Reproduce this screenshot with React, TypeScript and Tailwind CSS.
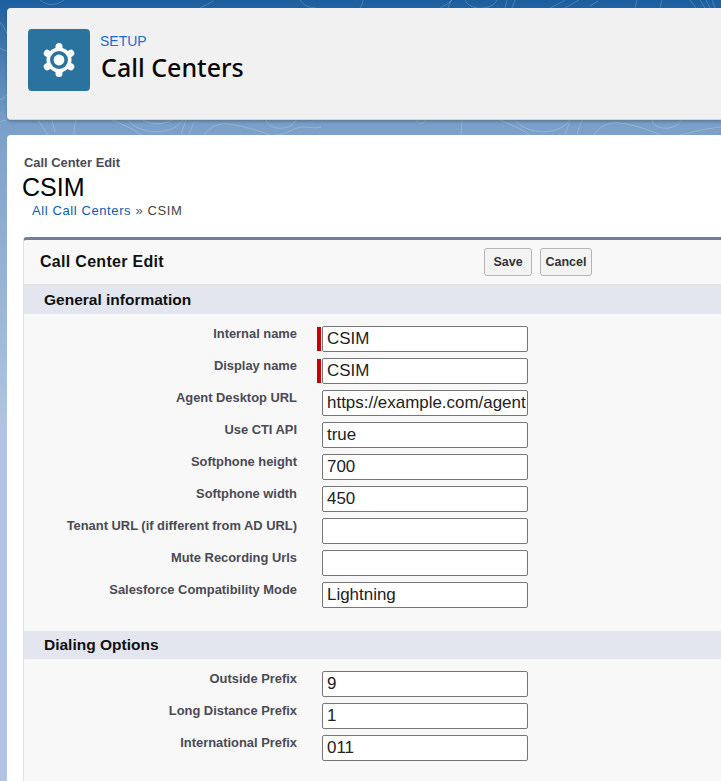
import React from "react";

const sans = "font-['Liberation_Sans',Arial,sans-serif]";

function Row({ label, value, required }: { label: string; value: string; required?: boolean }) {
  return (
    <div className="flex h-[26px] items-start">
      <div className="w-[273px] shrink-0 text-right text-[12.9px] leading-[15px] font-bold text-[#4a4a56]">{label}</div>
      <div className="ml-[20px] flex h-[26px] w-[4px] shrink-0 items-center">
        {required && <div className="h-[24px] w-[4px] bg-[#cc0000]" />}
      </div>
      <div className="ml-[1px] h-[26px] w-[206px] shrink-0 overflow-hidden rounded-[2px] border border-[#767676] bg-white pl-[4px] text-[16.95px] leading-[24px] whitespace-nowrap text-[#222222]">
        {value}
      </div>
    </div>
  );
}

function Section({ title, rows }: { title: string; rows: { label: string; value: string; required?: boolean }[] }) {
  return (
    <section>
      <h3 className="h-[28px] bg-[#e3e6ef] pl-[20px] text-[15.5px] leading-[27px] font-bold text-[#111111]">{title}</h3>
      <div className="flex flex-col gap-[6px] pt-[12px] pb-[23px]">
        {rows.map((r) => (
          <Row key={r.label} {...r} />
        ))}
      </div>
    </section>
  );
}

function Contours() {
  return (
    <svg className="absolute inset-0 h-full w-full" viewBox="0 0 721 781" fill="none" stroke="#ffffff" strokeOpacity="0.2" strokeWidth="1">
      <path d="M38 120l10 15M52 120l3 12M76 120c-2 5-2 10-2 15" />
      <path d="M112 120c15 6 22 10 30 15M128 120c10 14 45 18 56-2M140 118c6 6 22 8 32 2" />
      <path d="M186 120l-5 14M194 122l-5 12" />
      <path d="M204 135c6-8 14-12 24-11s30 6 42 11" />
      <path d="M266 120c2 10 24 12 30 0M274 135c14 0 20-8 28-8s14 2 19 0" />
      <path d="M426 120c-3 5-8 4-10 0M462 120c0 5-1 10-1 15" />
      <path d="M500 120c15 6 22 10 30 15M515 120c10 14 45 18 56-2" />
      <path d="M570 122l-5 12M582 120l-5 14M594 135c6-10 16-13 26-12s28 6 40 12" />
      <path d="M652 120c2 10 22 12 30 0M680 135c10-2 22-6 41-8" />
      <path d="M440 8c8-4 10-6 12-8M448 8l3-8M465 0c3 6 10 9 18 8s12-4 14-8M505 8l2-8M515 0l-3 8M550 8c6-3 12-6 15-8M565 8c6-3 10-6 14-8M590 6l8-5M635 8l2-8M660 8l2-8M690 0l6 8M700 0l5 8M712 0l3 8M706 0l4 8" />
      <path d="M40 0c6 5 14 7 24 0M200 8c8-4 12-6 14-8M300 0c4 6 10 8 16 8M360 8c2-3 3-5 3-8" />
      <path d="M0 22c3 3 5 7 7 12M0 48c3 2 5 3 7 3M0 100c3-1 5-3 7-6M0 122c3-2 5-2 7-2" />
    </svg>
  );
}

function Gear() {
  const angles = [90, 30, -30];
  return (
    <svg width="38" height="38" viewBox="-19 -19 38 38">
      <circle r="12.5" fill="#ffffff" />
      {angles.map((a) => (
        <line
          key={a}
          x1={-13.6 * Math.cos((a * Math.PI) / 180)}
          y1={-13.6 * Math.sin((a * Math.PI) / 180)}
          x2={13.6 * Math.cos((a * Math.PI) / 180)}
          y2={13.6 * Math.sin((a * Math.PI) / 180)}
          stroke="#ffffff"
          strokeWidth="7"
          strokeLinecap="round"
        />
      ))}
      <circle r="9" fill="#2a739e" />
      <circle r="5.4" fill="#ffffff" />
    </svg>
  );
}

export default function App() {
  return (
    <div className={`relative h-[781px] w-[721px] overflow-hidden bg-[linear-gradient(to_bottom,#1b5e9f_0px,#7aa0c9_125px,#b0c4e0_420px)] ${sans}`}>
      <Contours />
      <div className="relative flex h-full flex-col pl-[7px] pt-[8px]">
        <header className="flex h-[112px] shrink-0 items-start rounded-l-[4px] border-b border-b-[#d5d5d5] bg-[#f1f1f1] pl-[21px] pt-[21px] shadow-[0_2px_3px_rgba(0,0,0,0.2)]">
          <div className="flex h-[62px] w-[62px] shrink-0 items-center justify-center rounded-[4px] bg-[#2a739e]">
            <Gear />
          </div>
          <div className="ml-[10px] flex flex-col">
            <div className="mt-[3px] text-[14px] leading-[18px] text-[#1b6ccb]">SETUP</div>
            <div className="mt-[1px] ml-[1px] font-['Noto_Sans',sans-serif] text-[25px] leading-[32px] font-medium text-[#080707]">Call Centers</div>
          </div>
        </header>

        <main className="mt-[15px] min-h-0 flex-1 rounded-tl-[4px] bg-white pl-[16px] pt-[21px]">
          <div className="pl-[1px] text-[12.9px] leading-[14px] font-bold text-[#4a4a56]">Call Center Edit</div>
          <h1 className="mt-[3px] -ml-[1px] text-[25px] leading-[28px] text-[#000000]">CSIM</h1>
          <div className="mt-[2px] pl-[9px] text-[13px] leading-[16px] tracking-[0.6px] whitespace-nowrap">
            <span className="text-[#0b5cab]">All Call Centers</span>
            <span className="text-[#555555]"> » </span>
            <span className="text-[#444444]">CSIM</span>
          </div>

          <div className="mt-[18px] rounded-tl-[4px] border-t-[3px] border-l border-t-[#747e96] border-l-[#e0e0e0] bg-[#f8f8f8] pb-[40px]">
            <div className="flex h-[46px] items-center border-b-2 border-b-[#e3e3e3]">
              <h2 className="w-[460px] pl-[16px] text-[16px] tracking-[0.3px] font-bold text-[#111111]">Call Center Edit</h2>
              <div className="flex gap-[8px]">
                <button className="h-[28px] w-[48px] rounded-[3px] border border-[#b5b5b5] bg-[#f3f3f3] text-[12.5px] font-bold text-[#333333]">Save</button>
                <button className="h-[28px] w-[52px] rounded-[3px] border border-[#b5b5b5] bg-[#f3f3f3] text-[12.5px] font-bold text-[#333333]">Cancel</button>
              </div>
            </div>
            <Section
              title="General information"
              rows={[
                { label: "Internal name", value: "CSIM", required: true },
                { label: "Display name", value: "CSIM", required: true },
                { label: "Agent Desktop URL", value: "https://example.com/agent" },
                { label: "Use CTI API", value: "true" },
                { label: "Softphone height", value: "700" },
                { label: "Softphone width", value: "450" },
                { label: "Tenant URL (if different from AD URL)", value: "" },
                { label: "Mute Recording Urls", value: "" },
                { label: "Salesforce Compatibility Mode", value: "Lightning" },
              ]}
            />
            <Section
              title="Dialing Options"
              rows={[
                { label: "Outside Prefix", value: "9" },
                { label: "Long Distance Prefix", value: "1" },
                { label: "International Prefix", value: "011" },
              ]}
            />
          </div>
        </main>
      </div>
    </div>
  );
}
